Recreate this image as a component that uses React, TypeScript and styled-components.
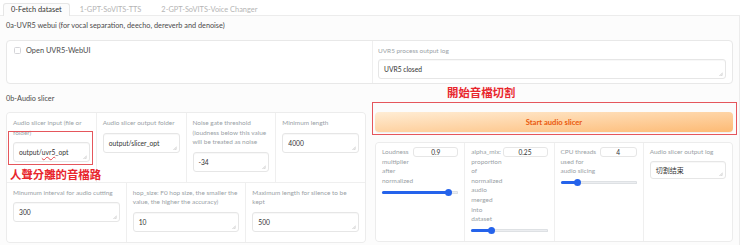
import styled, { createGlobalStyle } from 'styled-components';

const GlobalStyle = createGlobalStyle`
  html, body { margin: 0; padding: 0; background: #fff; }
  body { font-family: Lato, "Noto Sans", sans-serif; color: #374151; }
`;

const Page = styled.div`
  width: 740px;
  height: 245px;
  overflow: hidden;
`;

const TabBar = styled.div`
  display: flex;
  align-items: flex-end;
  height: 16px;
  padding-left: 3px;
  border-bottom: 1px solid #ececec;
  box-sizing: border-box;
`;

const Tab = styled.div<{ $active?: boolean }>`
  height: 13px;
  line-height: 12px;
  padding: 0 ${p => (p.$active ? 7 : 9)}px;
  font-size: 7.4px;
  color: ${p => (p.$active ? '#333' : '#b5b5b5')};
  background: ${p => (p.$active ? '#fcfcfc' : 'transparent')};
  border: 1px solid ${p => (p.$active ? '#e6e6e6' : 'transparent')};
  border-bottom: none;
  border-radius: 3px 3px 0 0;
  margin-bottom: -1px;
  box-sizing: border-box;
`;

const Panel = styled.div`
  background: #fcfcfc;
  border-right: 1px solid #ececec;
  padding: 5px 6px;
  height: 229px;
  box-sizing: border-box;
`;

const SectionTitle = styled.div<{ $top: number }>`
  font-size: 7.3px;
  line-height: 10px;
  color: #4b4b4b;
  margin-top: ${p => p.$top}px;
`;

const Block = styled.div`
  display: grid;
  grid-template-columns: 365px 1fr;
  margin-top: 9px;
  width: 727px;
  height: 44px;
  box-sizing: border-box;
  border: 1px solid #e8e8e8;
  border-radius: 4px;
  background: #fff;
`;

const CheckCell = styled.label`
  display: flex;
  align-items: flex-start;
  gap: 5px;
  padding: 6px 7px;
  font-size: 7.4px;
  line-height: 8px;
  color: #4b4b4b;
`;

const CheckBox = styled.span`
  width: 7px;
  height: 7px;
  box-sizing: border-box;
  border: 1px solid #d4d4d8;
  border-radius: 1.5px;
  background: #fff;
`;

const LogCell = styled.div`
  border-left: 1px solid #efefef;
  padding: 5px 6px 0 5px;
`;

const Label = styled.div`
  font-size: 6.45px;
  line-height: 9.6px;
  color: #9a9fa6;
`;

const TextBox = styled.div<{ $top?: number; $h?: number; $cjk?: boolean }>`
  position: relative;
  margin-top: ${p => p.$top ?? 5}px;
  height: ${p => p.$h ?? 20}px;
  box-sizing: border-box;
  border: 1px solid #e6e6e6;
  border-radius: 3px;
  background: #fff;
  box-shadow: inset 0 1px 1px rgba(0, 0, 0, 0.03);
  padding: 0 5px;
  display: flex;
  align-items: center;
  font-size: ${p => (p.$cjk ? 7 : 6.7)}px;
  font-family: ${p => (p.$cjk ? '"Noto Sans CJK SC", sans-serif' : 'Lato, sans-serif')};
  color: #333;
  white-space: nowrap;
`;

const Squiggle = styled.span`
  text-decoration: underline wavy #e5484d;
  text-decoration-thickness: 0.6px;
  text-underline-offset: 1px;
`;

const Grip = styled.svg`
  position: absolute;
  right: 2px;
  bottom: 2px;
  width: 4px;
  height: 4px;
`;

const MainRow = styled.div`
  position: relative;
  display: grid;
  grid-template-columns: 360px 358px;
  column-gap: 9px;
  margin-top: 8px;
`;

const RightCol = styled.div`
  display: flex;
  flex-direction: column;
  gap: 10px;
`;

const Group = styled.div`
  display: flex;
  flex-direction: column;
  gap: 1px;
  border: 1px solid #ececec;
  border-radius: 4px;
  overflow: hidden;
  background: #efefef;
`;

const GroupRow = styled.div<{ $cols: number }>`
  display: grid;
  grid-template-columns: repeat(${p => p.$cols}, 1fr);
  gap: 1px;
`;

const Cell = styled.div`
  background: #fff;
  padding: 5px 6px 10px;
  min-width: 0;
`;

const SliderCell = styled.div`
  background: #fff;
  padding: 4px 6px 6px;
  min-width: 0;
`;

const NumberRow = styled.div`
  display: flex;
  align-items: flex-start;
`;

const NumberLabel = styled(Label)`
  flex: 1;
  min-width: 0;
`;

const NumberBox = styled.div<{ $w: number }>`
  width: ${p => p.$w}px;
  height: 10px;
  box-sizing: border-box;
  border: 1px solid #e6e6e6;
  border-radius: 3px;
  font-size: 6.6px;
  line-height: 8px;
  text-align: center;
  color: #333;
  background: #fff;
`;

const Track = styled.div`
  position: relative;
  margin-top: 3px;
  height: 8px;
`;

const Rail = styled.div`
  position: absolute;
  left: 0;
  right: 0;
  top: 2.5px;
  height: 3px;
  border-radius: 2px;
  background: #eceef1;
  box-shadow: inset 0 0 0 0.5px #cfd3d8;
`;

const Fill = styled.div<{ $pct: number }>`
  position: absolute;
  left: 0;
  top: 2.5px;
  height: 3px;
  width: ${p => p.$pct}%;
  border-radius: 2px;
  background: #2563eb;
`;

const Thumb = styled.div<{ $pct: number }>`
  position: absolute;
  top: 0.5px;
  left: calc(${p => p.$pct}% - 3.5px);
  width: 7px;
  height: 7px;
  border-radius: 50%;
  background: #2563eb;
`;

const StartButton = styled.button`
  height: 20px;
  border: none;
  border-radius: 4px;
  background: linear-gradient(to bottom right, #ffedd5, #fdba74);
  box-shadow: 0 1px 1px rgba(0, 0, 0, 0.05);
  color: #ea580c;
  font-family: Lato, sans-serif;
  font-weight: 700;
  font-size: 7.6px;
  padding: 0;
`;

const RedNote = styled.div<{ $x: number; $y: number }>`
  position: absolute;
  left: ${p => p.$x}px;
  top: ${p => p.$y}px;
  font-family: "Noto Sans CJK TC", sans-serif;
  font-weight: 700;
  font-size: 11.4px;
  line-height: 14px;
  color: #e8262d;
  white-space: nowrap;
`;

const RedFrame = styled.div<{ $x: number; $y: number; $w: number; $h: number }>`
  position: absolute;
  left: ${p => p.$x}px;
  top: ${p => p.$y}px;
  width: ${p => p.$w}px;
  height: ${p => p.$h}px;
  box-sizing: border-box;
  border: 1px solid #e5565c;
  pointer-events: none;
`;

function ResizeGrip() {
  return (
    <Grip viewBox="0 0 4 4">
      <path d="M0.5 4 L4 0.5 M2.3 4 L4 2.3" stroke="#9a9a9a" strokeWidth="0.5" fill="none" />
    </Grip>
  );
}

function Field({ label, value, children }: { label: string; value?: string; children?: React.ReactNode }) {
  return (
    <Cell>
      <Label>{label}</Label>
      <TextBox>
        {children ?? value}
        <ResizeGrip />
      </TextBox>
    </Cell>
  );
}

function SliderField({ label, value, pct, boxWidth }: { label: string; value: string; pct: number; boxWidth: number }) {
  return (
    <SliderCell>
      <NumberRow>
        <NumberLabel>{label}</NumberLabel>
        <NumberBox $w={boxWidth}>{value}</NumberBox>
      </NumberRow>
      <Track>
        <Rail />
        <Fill $pct={pct} />
        <Thumb $pct={pct} />
      </Track>
    </SliderCell>
  );
}

export default function App() {
  return (
    <Page>
      <GlobalStyle />
      <TabBar>
        <Tab $active>0-Fetch dataset</Tab>
        <Tab>1-GPT-SoVITS-TTS</Tab>
        <Tab>2-GPT-SoVITS-Voice Changer</Tab>
      </TabBar>
      <Panel>
        <SectionTitle $top={0}>0a-UVR5 webui (for vocal separation, deecho, dereverb and denoise)</SectionTitle>
        <Block>
          <CheckCell>
            <CheckBox />
            Open UVR5-WebUI
          </CheckCell>
          <LogCell>
            <Label>UVR5 process output log</Label>
            <TextBox $top={3}>
              UVR5 closed
              <ResizeGrip />
            </TextBox>
          </LogCell>
        </Block>

        <SectionTitle $top={10}>0b-Audio slicer</SectionTitle>
        <MainRow>
          <Group>
            <GroupRow $cols={4}>
              <Field label="Audio slicer input (file or folder)">
                output/<Squiggle>uvr5</Squiggle>_opt
              </Field>
              <Field label="Audio slicer output folder" value="output/slicer_opt" />
              <Field label="Noise gate threshold (loudness below this value will be treated as noise" value="-34" />
              <Field label="Minimum length" value="4000" />
            </GroupRow>
            <GroupRow $cols={3}>
              <Field label="Minumum interval for audio cutting" value="300" />
              <Field label="hop_size: F0 hop size, the smaller the value, the higher the accuracy)" value="10" />
              <Field label="Maximum length for silence to be kept" value="500" />
            </GroupRow>
          </Group>

          <RightCol>
            <StartButton>Start audio slicer</StartButton>
            <Group>
              <GroupRow $cols={4}>
                <SliderField label="Loudness multiplier after normalized" value="0.9" pct={87} boxWidth={45} />
                <SliderField label="alpha_mix: proportion of normalized audio merged into dataset" value="0.25" pct={27} boxWidth={45} />
                <SliderField label="CPU threads used for audio slicing" value="4" pct={22} boxWidth={37} />
                <SliderCell>
                  <Label>Audio slicer output log</Label>
                  <TextBox $top={4} $h={18} $cjk>
                    切割结束
                    <ResizeGrip />
                  </TextBox>
                </SliderCell>
              </GroupRow>
            </Group>
          </RightCol>

          <RedNote $x={441} $y={-27}>開始音檔切割</RedNote>
          <RedFrame $x={366} $y={-10} $w={365} $h={33} />
          <RedFrame $x={2} $y={19} $w={85} $h={34} />
          <RedNote $x={4} $y={55}>人聲分離的音檔路</RedNote>
        </MainRow>
      </Panel>
    </Page>
  );
}
